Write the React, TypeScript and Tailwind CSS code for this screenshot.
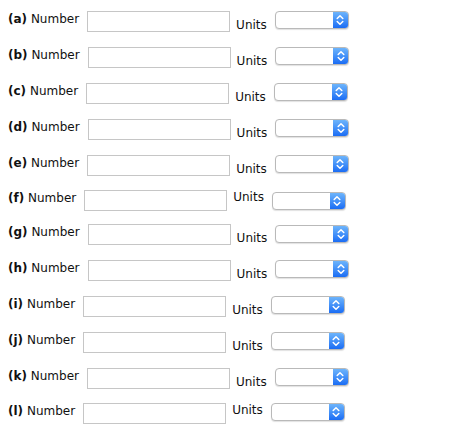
const rows = [
  { key: 'a', gap: '', unitsUp: false, selTop: '' },
  { key: 'b', gap: 'mt-[15px]', unitsUp: false, selTop: '' },
  { key: 'c', gap: 'mt-[15px]', unitsUp: false, selTop: '' },
  { key: 'd', gap: 'mt-[15px]', unitsUp: false, selTop: '' },
  { key: 'e', gap: 'mt-[15px]', unitsUp: false, selTop: '' },
  { key: 'f', gap: 'mt-[14px]', unitsUp: true, selTop: 'mt-[2px]' },
  { key: 'g', gap: 'mt-[13px]', unitsUp: false, selTop: 'mt-[1px]' },
  { key: 'h', gap: 'mt-[15px]', unitsUp: false, selTop: '' },
  { key: 'i', gap: 'mt-[15px]', unitsUp: false, selTop: '' },
  { key: 'j', gap: 'mt-[15px]', unitsUp: false, selTop: '' },
  { key: 'k', gap: 'mt-[15px]', unitsUp: false, selTop: '' },
  { key: 'l', gap: 'mt-[14px]', unitsUp: true, selTop: '' },
]

function UnitSelect({ className }: { className: string }) {
  return (
    <div className={`flex h-[18px] w-[74px] rounded-[4px] border border-[#b9b9b9] bg-white shadow-[0_1px_1px_rgba(0,0,0,0.12)] overflow-hidden ${className}`}>
      <div className="flex-1" />
      <div className="w-[15px] h-full flex items-center justify-center bg-gradient-to-b from-[#6db4fb] to-[#1a6cf4]">
        <svg width="8" height="12" viewBox="0 0 8 12" fill="none" stroke="white" strokeWidth="1.5" strokeLinecap="round" strokeLinejoin="round">
          <path d="M1.2 4.5 L4 1.7 L6.8 4.5" />
          <path d="M1.2 7.5 L4 10.3 L6.8 7.5" />
        </svg>
      </div>
    </div>
  )
}

export default function App() {
  return (
    <div className="w-[458px] h-[433px] bg-white text-[#111] text-[12px] leading-[14px] font-['DejaVu_Sans',Verdana,sans-serif]">
      <div className="flex flex-col pl-2 pt-[11px]">
        {rows.map(r => (
          <div key={r.key} className={`flex items-start ${r.gap}`}>
            <span className="mt-[1px] whitespace-nowrap">
              <b>({r.key})</b> Number
            </span>
            <input type="text" className="ml-2 w-[143px] h-[21px] border border-[#c6c6c6] bg-white outline-none" />
            <span className={`ml-[6px] whitespace-nowrap ${r.unitsUp ? '' : 'mt-[7px]'}`}>Units</span>
            <UnitSelect className={`ml-2 ${r.selTop}`} />
          </div>
        ))}
      </div>
    </div>
  )
}
